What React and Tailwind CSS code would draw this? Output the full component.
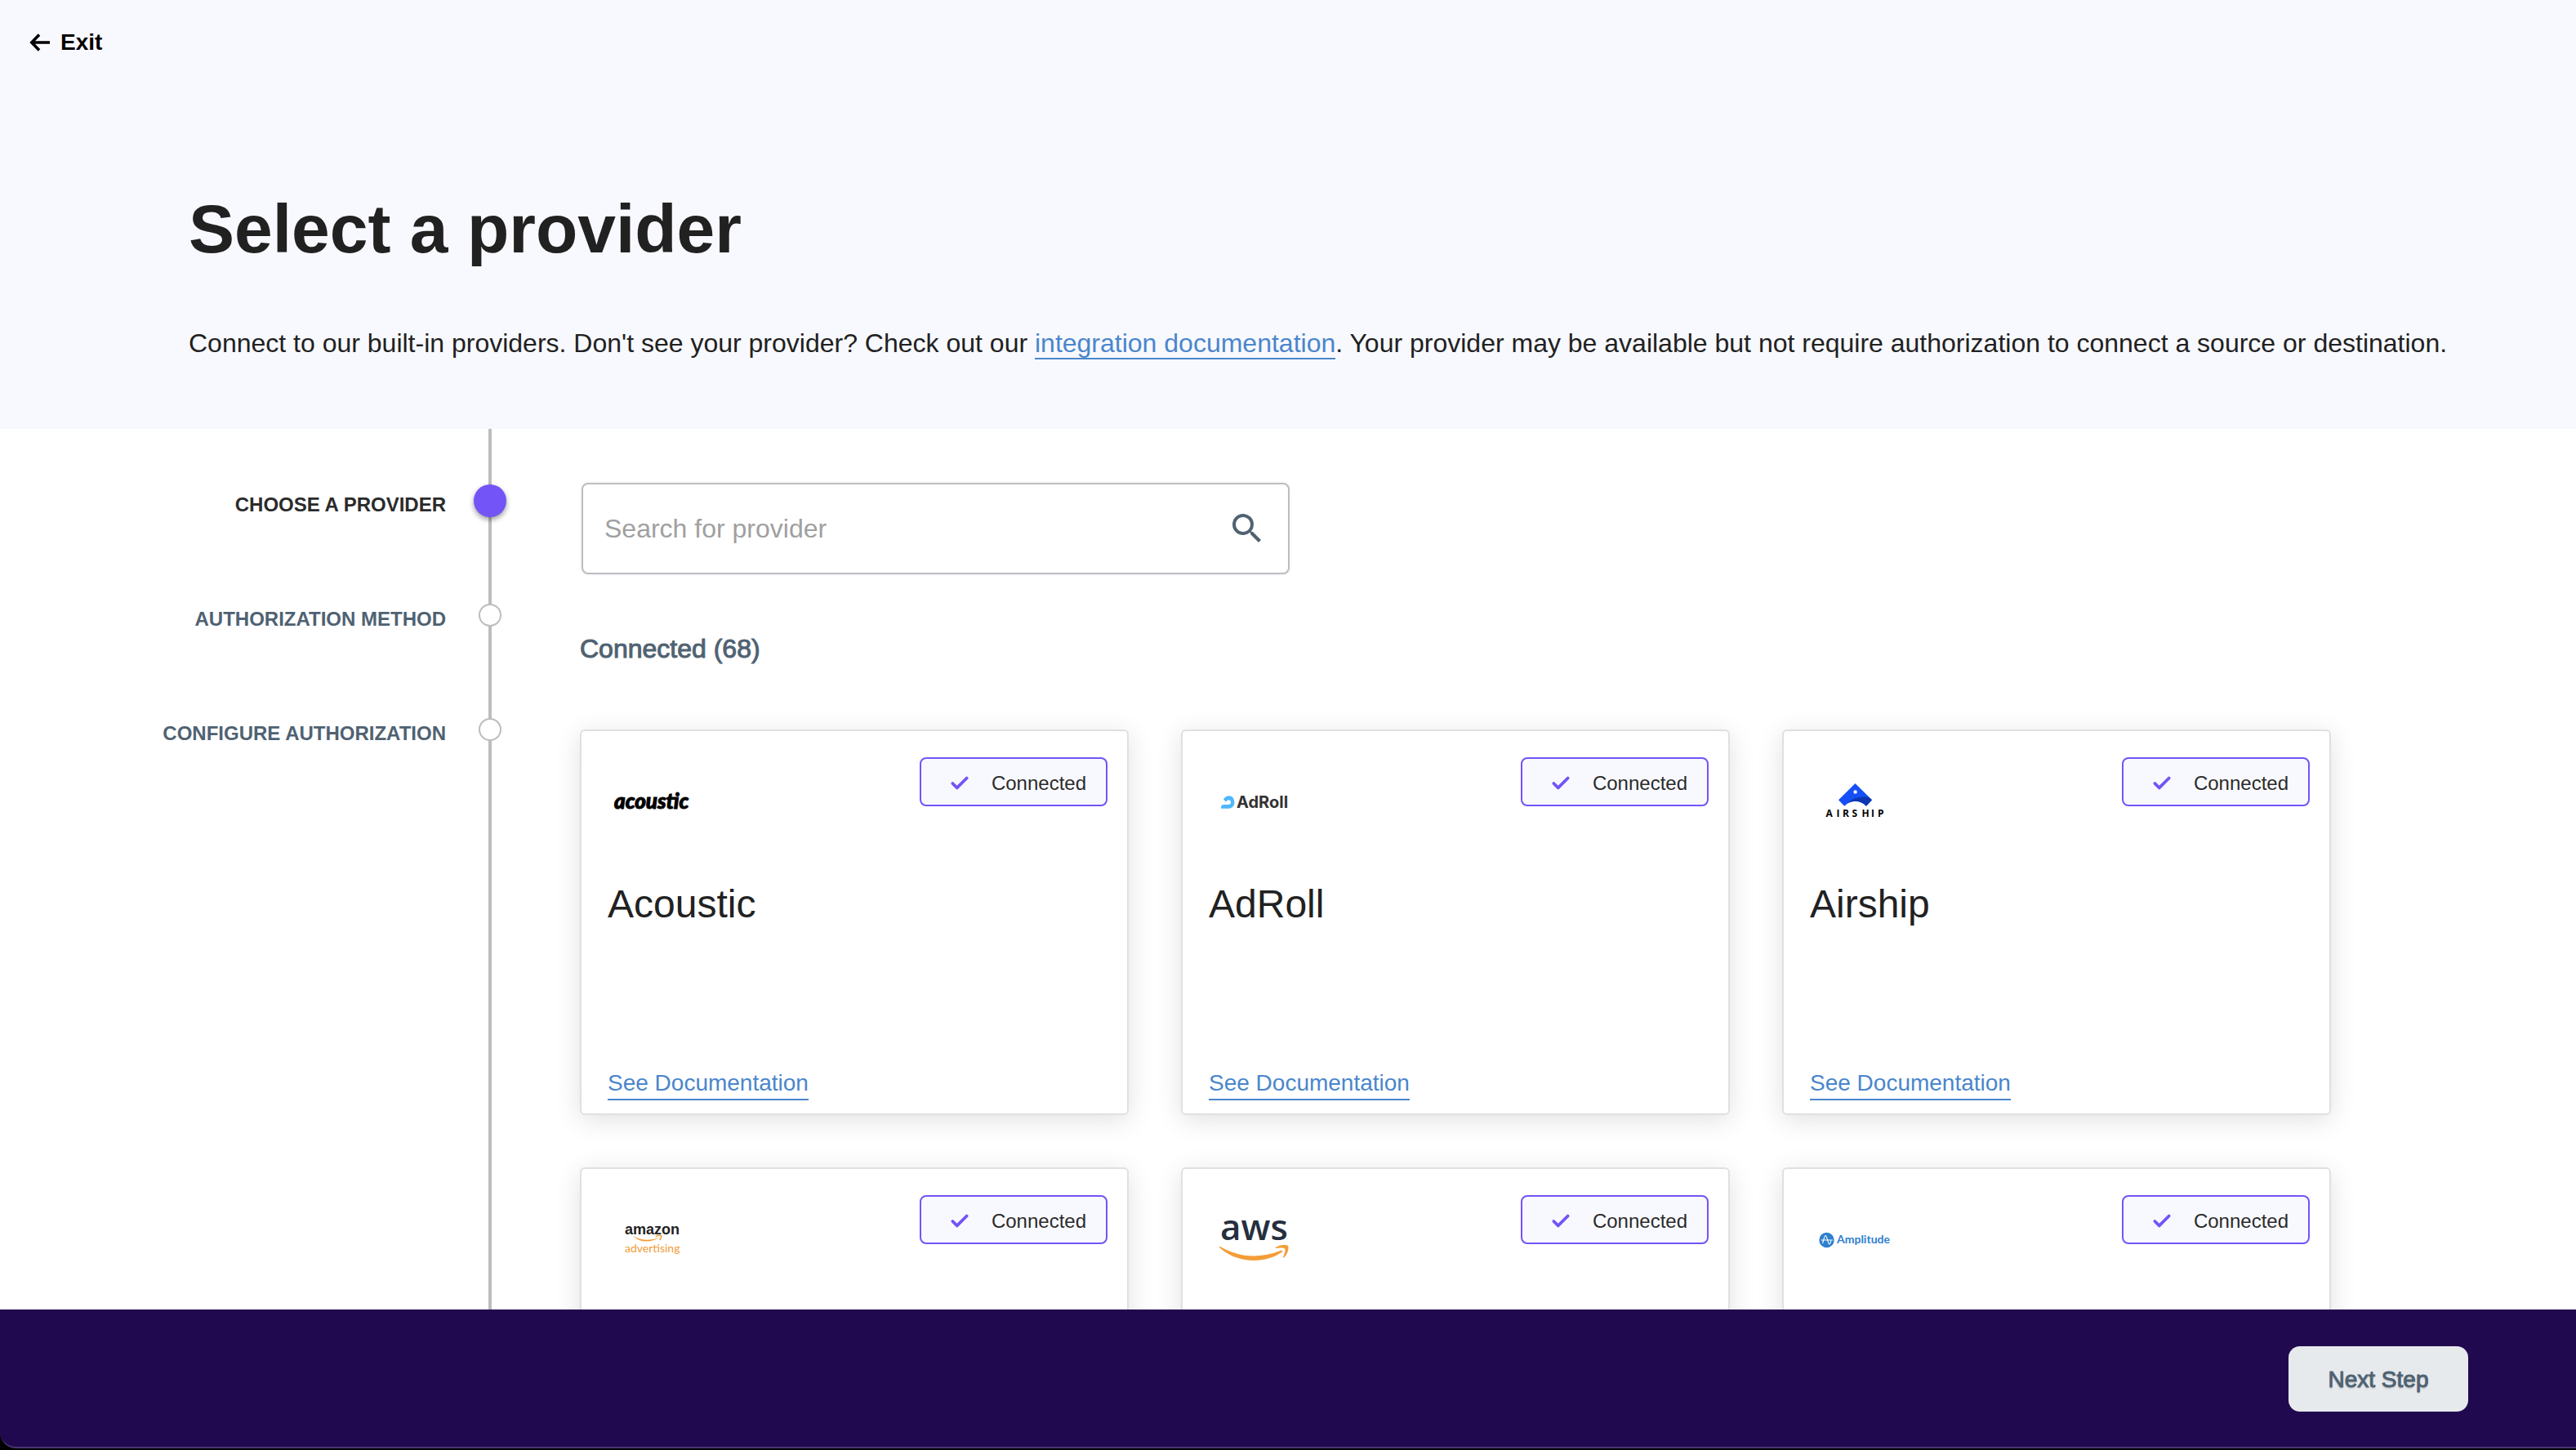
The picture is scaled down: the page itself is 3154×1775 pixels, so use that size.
import React, { useState } from "react";
import { Check } from "lucide-react";
import { MdSearch } from "react-icons/md";

const steps = [
  { label: "CHOOSE A PROVIDER", active: true },
  { label: "AUTHORIZATION METHOD", active: false },
  { label: "CONFIGURE AUTHORIZATION", active: false },
];

function AcousticLogo() {
  return (
    <svg viewBox="0 0 112 112" className="size-28" aria-hidden="true">
      <text
        x="8"
        y="63"
        fontSize="26"
        fontWeight="900"
        fontStyle="italic"
        stroke="#000"
        strokeWidth="1"
        className="font-['Lato',sans-serif]"
      >
        acoustic
      </text>
    </svg>
  );
}

function AdRollLogo() {
  return (
    <svg viewBox="0 0 112 112" className="size-28" aria-hidden="true">
      <path
        d="M18 51.5 C20 48.5 22 47.3 24.5 47.3 C29 47.3 31.4 50.8 31.4 55 C31.4 59.5 28.6 62.7 24 62.7 H15 V61 C15 59 16.5 58 18.5 58 H24 C26 58 27 56.8 27 55 C27 53.2 26 52.2 24.3 52.2 C22.8 52.2 22 53.2 21 54.5 Z"
        fill="#4db8fb"
      />
      <text
        x="34"
        y="62"
        fontSize="20"
        fontWeight="700"
        fill="#333"
        className="font-['Inter',sans-serif]"
      >
        AdRoll
      </text>
    </svg>
  );
}

function AirshipLogo() {
  return (
    <svg viewBox="0 0 112 112" className="size-28" aria-hidden="true">
      <path
        d="M55.5 32 L76 52.3 L69 59.7 C62 52 49 52 42.3 59.7 L35 52.3 Z"
        fill="#164ff7"
      />
      <path
        d="M46 56.3 C54 49 62 47.5 72.5 49 L76 52.3 L69 59.7 C63 52.8 53 52 46 56.3 Z"
        fill="#0c37b0"
      />
      <circle cx="55.6" cy="42.4" r="2.2" fill="#fff" />
      <text
        x="19.5 32.5 40 51.5 63.5 75 83"
        y="73"
        fontSize="12"
        fontWeight="700"
        className="font-['Open_Sans',sans-serif]"
      >
        AIRSHIP
      </text>
    </svg>
  );
}

function AmazonAdvertisingLogo() {
  return (
    <svg viewBox="0 0 112 112" className="size-28" aria-hidden="true">
      <text
        x="21"
        y="48"
        fontSize="18"
        fontWeight="700"
        fill="#222"
        className="font-['Liberation_Sans',sans-serif]"
      >
        amazon
      </text>
      <path
        d="M31 49.7 C40 56 53 56 63.2 51.8 C54 58.5 39 58.5 31 49.7 Z"
        fill="#f19b38"
      />
      <path
        d="M58.7 50.6 C61 49.3 64 49 65.6 49.6 C66 51.3 65 53.6 63.6 55"
        fill="none"
        stroke="#f19b38"
        strokeWidth="1.4"
      />
      <text
        x="21"
        y="70"
        fontSize="14"
        fontWeight="400"
        fill="#f19b38"
        className="font-['Lato',sans-serif]"
      >
        advertising
      </text>
    </svg>
  );
}

function AwsLogo() {
  return (
    <svg viewBox="0 0 112 112" className="size-28" aria-hidden="true">
      <text
        x="14"
        y="55"
        fontSize="44"
        fontWeight="600"
        fill="#252f3e"
        className="font-['Open_Sans',sans-serif]"
      >
        aws
      </text>
      <path
        d="M13.6 62.8 C39 77.5 63 77.5 88.4 67.8 C90 67.4 91 68.6 89.6 69.8 C68 85 33 83 13 64 C12.6 63.2 13 62.5 13.6 62.8 Z"
        fill="#f49d37"
      />
      <path
        d="M81.4 64.4 C85.5 60.8 94.5 60.2 97 62 C98.6 65.5 95.8 73.5 92 76.6 C91 77 90.8 76.4 91 75.8 C92.5 72.5 94.2 67.8 93.3 65.8 C91.8 64 86 64.5 82 65 C81 65 81 64.8 81.4 64.4 Z"
        fill="#f49d37"
      />
    </svg>
  );
}

function AmplitudeLogo() {
  return (
    <svg viewBox="0 0 112 112" className="size-28" aria-hidden="true">
      <circle cx="20.5" cy="55" r="9.2" fill="#2f80cf" />
      <path
        d="M14 55 H27.5 M15.7 58.5 C17 54 18 49.5 19.2 49.5 C20.9 49.5 22.1 60 23.9 60 C24.9 60 25.3 58 25.7 56"
        fill="none"
        stroke="#fff"
        strokeWidth="1.2"
        strokeLinecap="round"
      />
      <text
        x="33"
        y="59"
        fontSize="14"
        fontWeight="700"
        fill="#2f80cf"
        className="font-['Lato',sans-serif]"
      >
        Amplitude
      </text>
    </svg>
  );
}

const providers = [
  { name: "Acoustic", Logo: AcousticLogo },
  { name: "AdRoll", Logo: AdRollLogo },
  { name: "Airship", Logo: AirshipLogo },
  { name: "Amazon Advertising", Logo: AmazonAdvertisingLogo },
  { name: "Amazon Web Services", Logo: AwsLogo },
  { name: "Amplitude", Logo: AmplitudeLogo },
];

function ProviderCard({ name, Logo }) {
  return (
    <li className="flex h-[472px] flex-col rounded-md border-2 border-[#e0e0e0] bg-white pt-8 pr-6 pb-4 pl-8 shadow-[0_6px_32px_rgba(0,0,0,0.12)]">
      <div className="flex items-start justify-between">
        <Logo />
        <div className="flex h-[60px] w-[230px] items-center justify-end gap-[26px] rounded-lg border-2 border-[#7354f6] bg-[#f8f9fe] pt-1 pr-6 text-[24px] text-[#2b2b2b]">
          <Check size={26} strokeWidth={3.5} color="#7354f6" />
          Connected
        </div>
      </div>
      <h3 className="mt-9 text-[48px] leading-[64px] text-[#212121]">{name}</h3>
      <a
        href="#docs"
        className="mt-auto self-start border-b-2 border-[#4a86cc] text-[28px] leading-[38px] text-[#4a86cc]"
      >
        See Documentation
      </a>
    </li>
  );
}

function Stepper() {
  return (
    <aside className="relative w-[620px] shrink-0 pt-[18px]">
      <div className="absolute inset-y-0 right-[18px] w-1 bg-[#bdbdbd]" />
      <ol>
        {steps.map((step) => (
          <li
            key={step.label}
            className="flex h-[140px] items-center justify-end gap-[34px]"
          >
            <span
              className={`pt-2.5 text-[24px] font-bold ${
                step.active ? "text-[#2b2b2b]" : "text-[#4f6272]"
              }`}
            >
              {step.label}
            </span>
            <span className="relative flex w-10 justify-center">
              {step.active ? (
                <span className="size-10 rounded-full bg-[#7354f6] shadow-[0_3px_6px_rgba(0,0,0,0.4)]" />
              ) : (
                <span className="size-7 rounded-full border-2 border-[#bdbdbd] bg-white" />
              )}
            </span>
          </li>
        ))}
      </ol>
    </aside>
  );
}

function App() {
  const [search, setSearch] = useState("");

  const filteredProviders = providers.filter((provider) =>
    provider.name.toLowerCase().includes(search.toLowerCase())
  );

  return (
    <div className="flex h-screen flex-col bg-white font-['Liberation_Sans',Arial,sans-serif] text-[#212121]">
      <header className="shrink-0 bg-[#f8f9fe] pt-8 pb-[81px]">
        <button
          type="button"
          className="ml-9 flex h-10 items-center gap-3 text-[28px] font-bold text-black"
        >
          <svg
            viewBox="0 0 26 22"
            className="h-[22px] w-[26px]"
            fill="none"
            stroke="currentColor"
            strokeWidth="3.6"
            aria-hidden="true"
          >
            <path d="M25 11 H3 M12 1.5 L2.8 11 L12 20.5" />
          </svg>
          Exit
        </button>
        <div className="mt-40 pl-[231px]">
          <h1 className="text-[84px] leading-[96px] font-bold">
            Select a provider
          </h1>
          <p className="mt-[68px] text-[32px] leading-[48px]">
            Connect to our built-in providers. Don't see your provider? Check
            out our{" "}
            <a href="#integrations" className="border-b-2 border-[#4a86cc] text-[#4a86cc]">
              integration documentation
            </a>
            . Your provider may be available but not require authorization to
            connect a source or destination.
          </p>
        </div>
      </header>

      <div className="flex min-h-0 flex-1">
        <Stepper />
        <main className="min-w-0 flex-1 overflow-y-auto pt-[66px] pr-[300px] pb-16 pl-[90px] [scrollbar-width:none]">
          <div className="ml-0.5 flex h-28 max-w-[867px] items-center rounded-lg border-2 border-[#bdbdbd] bg-white px-[26px] ring-2 ring-[#f8f9fe]">
            <input
              type="text"
              aria-label="Search for provider"
              value={search}
              onChange={(e) => setSearch(e.target.value)}
              placeholder="Search for provider"
              className="min-w-0 flex-1 text-[32px] outline-none placeholder:text-[#a0a0a0]"
            />
            <MdSearch size={48} color="#4f6272" />
          </div>

          <h2 className="mt-[71px] text-[32px] leading-10 text-[#4f6272] [-webkit-text-stroke:1px_#4f6272]">
            Connected (68)
          </h2>

          <ul className="mt-[79px] grid grid-cols-3 gap-16">
            {filteredProviders.map((provider) => (
              <ProviderCard key={provider.name} {...provider} />
            ))}
          </ul>
        </main>
      </div>

      <footer className="shrink-0 bg-black pb-0.5">
        <div className="flex h-[170px] items-center justify-end rounded-bl-[20px] border-b-2 border-[#4a3572] bg-[#20094f] pt-0.5 pr-[132px]">
          <button
            type="button"
            className="h-20 w-[220px] rounded-[14px] bg-[#e7eaed] pt-0.5 text-[28px] text-[#4f6272] [-webkit-text-stroke:1px_#4f6272] [text-shadow:0_2px_2px_rgba(0,0,0,0.15)]"
          >
            Next Step
          </button>
        </div>
      </footer>
    </div>
  );
}

export default App;
